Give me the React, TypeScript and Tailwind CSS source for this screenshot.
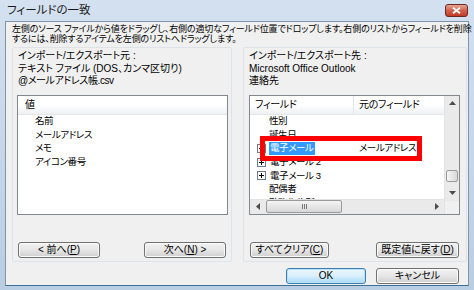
import React from "react";

const font = "font-['Liberation_Sans','Noto_Sans_CJK_JP',sans-serif] [font-feature-settings:'palt']";

function Btn({ children, w, def = false }: { children: React.ReactNode; w: string; def?: boolean }) {
  return (
    <button
      type="button"
      className={`${w} h-[16px] rounded-[3px] border text-[10px] leading-none text-black flex items-center justify-center ${
        def
          ? "border-[#3c7fb1] bg-gradient-to-b from-[#eaf6fd] via-[#d9f0fc] to-[#a7d9f5] shadow-[inset_0_0_0_1px_#b8e0f6]"
          : "border-[#707070] bg-gradient-to-b from-[#f2f2f2] via-[#e6e6e6] to-[#cfcfcf] shadow-[inset_0_0_0_1px_#fbfbfb]"
      }`}
    >
      {children}
    </button>
  );
}

function Key({ k }: { k: string }) {
  return (
    <>
      (<span className="underline">{k}</span>)
    </>
  );
}

function PlusBox() {
  return (
    <svg width="9" height="9" viewBox="0 0 9 9" className="shrink-0">
      <rect x="0.5" y="0.5" width="8" height="8" fill="#fff" stroke="#6d7b8a" />
      <path d="M2 4.5h5M4.5 2v5" stroke="#000" />
    </svg>
  );
}

export default function App() {
  const leftRows = ["名前", "メールアドレス", "メモ", "アイコン番号"];
  const row = "h-[13.6px] flex items-center text-[9.5px] tracking-[-0.4px] text-black";

  return (
    <div className={`w-[474px] h-[290px] overflow-hidden flex flex-col bg-gradient-to-b from-[#d3e1f0] to-[#b9cde3] ${font}`}>
      {/* タイトルバー */}
      <div className="h-[21px] flex items-center justify-between pl-[7px] pr-[6px] shrink-0">
        <span className="text-[11.5px] leading-none text-[#1a1a1a]">フィールドの一致</span>
        <div className="w-[23px] h-[13px] rounded-[3px] border border-[#6d2a22] bg-gradient-to-b from-[#e8a493] via-[#d0614c] to-[#c23a26] flex items-center justify-center">
          <svg width="9" height="7" viewBox="0 0 9 7">
            <path d="M1 0.8L8 6.2M8 0.8L1 6.2" stroke="#fff" strokeWidth="1.8" />
          </svg>
        </div>
      </div>

      {/* 本体 */}
      <div className="flex-1 mx-[5px] mb-[4px] bg-[#f0f0f0] border border-[#7f93a9] border-b-[#3b6f94] flex flex-col">
        <div className="pl-[6px] pt-[2px] text-[9px] leading-[10px] tracking-[-0.15px] text-black whitespace-nowrap">
          <div>左側のソース ファイルから値をドラッグし、右側の適切なフィールド位置でドロップします。右側のリストからフィールドを削除</div>
          <div>するには、削除するアイテムを左側のリストへドラッグします。</div>
        </div>

        <div className="flex mt-[3px] pl-[6px] gap-[11px]">
          {/* 左グループ */}
          <div className="w-[220px] h-[215px] border border-[#dde3e8] rounded-[2px] flex flex-col">
            <div className="pl-[5px] pt-[2px] text-[10px] leading-[12.5px] text-black">
              <div>インポート/エクスポート元 :</div>
              <div>テキスト ファイル (DOS、カンマ区切り)</div>
              <div className="tracking-[-0.4px]">@メールアドレス帳.csv</div>
            </div>
            <div className="ml-[4px] mt-[7px] w-[211px] h-[120px] bg-white border border-[#828790] flex flex-col">
              <div className="h-[19px] flex items-center pl-[7px] text-[10px] border-b border-[#e3e6ea] bg-gradient-to-b from-white via-white to-[#eef0f3]">
                値
              </div>
              {leftRows.map((r) => (
                <div key={r} className={`${row} pl-[17px]`}>
                  {r}
                </div>
              ))}
            </div>
            <div className="flex justify-between px-[5px] mt-[27px]">
              <Btn w="w-[82px]">
                &lt; 前へ<Key k="P" />
              </Btn>
              <Btn w="w-[82px]">
                次へ<Key k="N" /> &gt;
              </Btn>
            </div>
          </div>

          {/* 右グループ */}
          <div className="w-[224px] h-[215px] border border-[#dde3e8] rounded-[2px] flex flex-col">
            <div className="pl-[5px] pt-[2px] text-[10px] leading-[12.5px] text-black">
              <div>インポート/エクスポート先 :</div>
              <div>Microsoft Office Outlook</div>
              <div>連絡先</div>
            </div>
            <div className="relative ml-[5px] mt-[7px] w-[211px] h-[120px] bg-white border border-[#828790] flex">
              <div className="flex-1 flex flex-col overflow-hidden">
                <div className="flex-1 flex flex-col overflow-hidden">
                  <div className="h-[19px] shrink-0 flex text-[10px] tracking-[-0.3px] border-b border-[#e3e6ea] bg-gradient-to-b from-white via-white to-[#eef0f3]">
                    <div className="w-[104px] flex items-center pl-[5px] border-r border-[#e3e6ea]">フィールド</div>
                    <div className="flex-1 flex items-center pl-[5px]">元のフィールド</div>
                  </div>
                  <div className={`${row} pl-[19px]`}>性別</div>
                  <div className={`${row} pl-[19px]`}>誕生日</div>
                  <div className={row}>
                    <div className="w-[104px] flex items-center pl-[7px] gap-[3px]">
                      <PlusBox />
                      <span className="bg-[#3399ff] text-white px-[1px] h-[13.6px] flex items-center">電子メール</span>
                    </div>
                    <span className="pl-[5px]">メールアドレス</span>
                  </div>
                  <div className={`${row} pl-[7px] gap-[4px]`}>
                    <PlusBox />
                    電子メール 2
                  </div>
                  <div className={`${row} pl-[7px] gap-[4px]`}>
                    <PlusBox />
                    電子メール 3
                  </div>
                  <div className={`${row} pl-[19px]`}>配偶者</div>
                  <div className={`${row} pl-[19px]`}>勤務先住所</div>
                </div>
                {/* 横スクロールバー */}
                <div className="h-[15px] shrink-0 flex items-center bg-[#eaeaea] border-t border-[#e3e3e3]">
                  <div className="w-[15px] flex items-center justify-center">
                    <svg width="4" height="7" viewBox="0 0 4 7"><path d="M4 0L0 3.5L4 7Z" fill="#4d4d4d" /></svg>
                  </div>
                  <div className="ml-[1px] w-[76px] h-[13px] rounded-[2px] border border-[#9a9a9a] bg-gradient-to-b from-[#f4f4f4] to-[#d8d8d8] flex items-center justify-center gap-[1px]">
                    <span className="w-[1px] h-[5px] bg-[#777]" />
                    <span className="w-[1px] h-[5px] bg-[#777]" />
                    <span className="w-[1px] h-[5px] bg-[#777]" />
                  </div>
                  <div className="flex-1" />
                  <div className="w-[15px] flex items-center justify-center">
                    <svg width="4" height="7" viewBox="0 0 4 7"><path d="M0 0L4 3.5L0 7Z" fill="#4d4d4d" /></svg>
                  </div>
                </div>
              </div>
              {/* 縦スクロールバー */}
              <div className="w-[15px] shrink-0 flex flex-col bg-[#eaeaea] border-l border-[#e3e3e3]">
                <div className="h-[15px] flex items-center justify-center">
                  <svg width="7" height="4" viewBox="0 0 7 4"><path d="M0 4L3.5 0L7 4Z" fill="#4d4d4d" /></svg>
                </div>
                <div className="mt-[59px] mx-[1px] h-[12px] rounded-[2px] border border-[#9a9a9a] bg-gradient-to-r from-[#f4f4f4] to-[#d8d8d8]" />
                <div className="h-[15px] mt-[4px] flex items-center justify-center">
                  <svg width="7" height="4" viewBox="0 0 7 4"><path d="M0 0L3.5 4L7 0Z" fill="#4d4d4d" /></svg>
                </div>
                <div className="flex-1 bg-[#f0f0f0]" />
              </div>
              {/* 赤枠 */}
              <div className="absolute left-[10px] top-[40px] w-[162px] h-[25px] border-[5px] border-[#ff0000]" />
            </div>
            <div className="flex justify-between pl-[6px] pr-[7px] mt-[27px]">
              <Btn w="w-[79px]">
                すべてクリア<Key k="C" />
              </Btn>
              <Btn w="w-[83px]">
                既定値に戻す<Key k="D" />
              </Btn>
            </div>
          </div>
        </div>

        <div className="flex justify-end gap-[10px] pr-[9px] mt-[6px]">
          <Btn w="w-[80px]" def>
            OK
          </Btn>
          <Btn w="w-[83px]">キャンセル</Btn>
        </div>
      </div>
    </div>
  );
}
